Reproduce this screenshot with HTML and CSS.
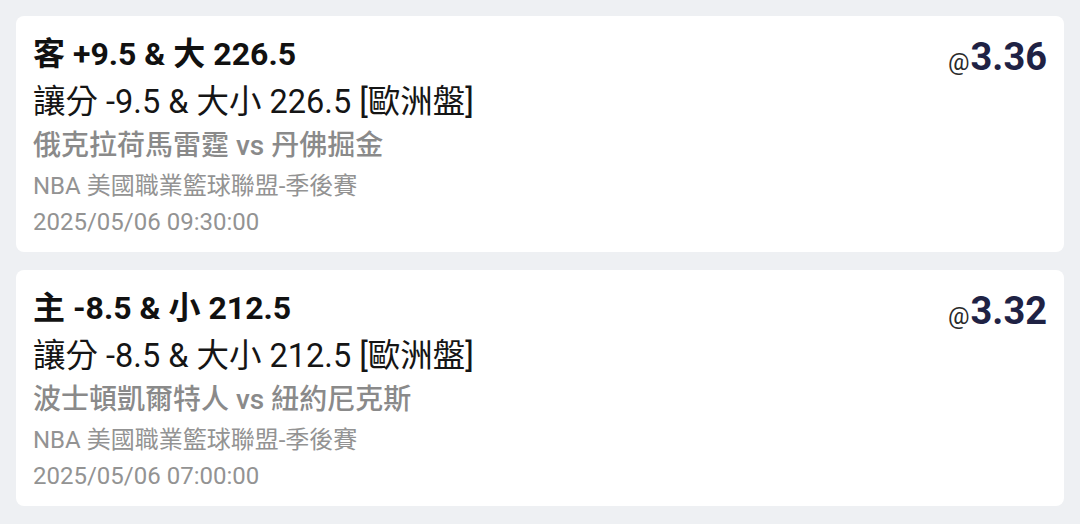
FILE: index.html
```html
<!DOCTYPE html>
<html lang="zh-Hant">
<head>
  <meta charset="UTF-8">
  <meta name="viewport" content="width=device-width, initial-scale=1.0">
  <title>投注紀錄</title>
  <link rel="stylesheet" href="styles.css">
</head>
<body>

  <div class="bet-list">
    <div class="bet-card">
      <div class="bet-info">
        <div class="bet-pick">客 +9.5 &amp; 大 226.5</div>
        <div class="bet-market">讓分 -9.5 &amp; 大小 226.5 [歐洲盤]</div>
        <div class="bet-match">俄克拉荷馬雷霆 vs 丹佛掘金</div>
        <div class="bet-league">NBA 美國職業籃球聯盟-季後賽</div>
        <div class="bet-time">2025/05/06 09:30:00</div>
      </div>
      <div class="bet-odds"><span class="at">@</span>3.36</div>
    </div>

    <div class="bet-card">
      <div class="bet-info">
        <div class="bet-pick">主 -8.5 &amp; 小 212.5</div>
        <div class="bet-market">讓分 -8.5 &amp; 大小 212.5 [歐洲盤]</div>
        <div class="bet-match">波士頓凱爾特人 vs 紐約尼克斯</div>
        <div class="bet-league">NBA 美國職業籃球聯盟-季後賽</div>
        <div class="bet-time">2025/05/06 07:00:00</div>
      </div>
      <div class="bet-odds"><span class="at">@</span>3.32</div>
    </div>
  </div>

</body>
</html>
```

FILE: styles.css
```css
body {
  font-family: Roboto, "Noto Sans CJK TC", sans-serif;
  background-color: #eef0f3;
  margin: 0;
  padding: 16px 16px 0;
}

.bet-list {
  display: flex;
  flex-direction: column;
  gap: 18px;
}

.bet-card {
  display: flex;
  justify-content: space-between;
  align-items: flex-start;
  height: 236px;
  box-sizing: border-box;
  padding: 14px 17px;
  background-color: #fff;
  border-radius: 8px;
}

.bet-pick {
  font-size: 32px;
  font-weight: bold;
  line-height: 48px;
  color: #111;
}

.bet-market {
  font-size: 32.5px;
  line-height: 48px;
  color: #151515;
}

.bet-match {
  font-size: 28px;
  font-weight: 500;
  line-height: 40px;
  color: #8a8a8a;
}

.bet-league {
  font-size: 24px;
  line-height: 40px;
  color: #939393;
}

.bet-time {
  font-size: 24px;
  line-height: 32px;
  color: #939393;
}

.bet-odds {
  margin-top: 3px;
  font-size: 38px;
  font-weight: bold;
  line-height: 48px;
  color: #1f2244;
}

.bet-odds .at {
  font-size: 24px;
  font-weight: normal;
  color: #2a2a2a;
  margin-right: 1px;
}
```
